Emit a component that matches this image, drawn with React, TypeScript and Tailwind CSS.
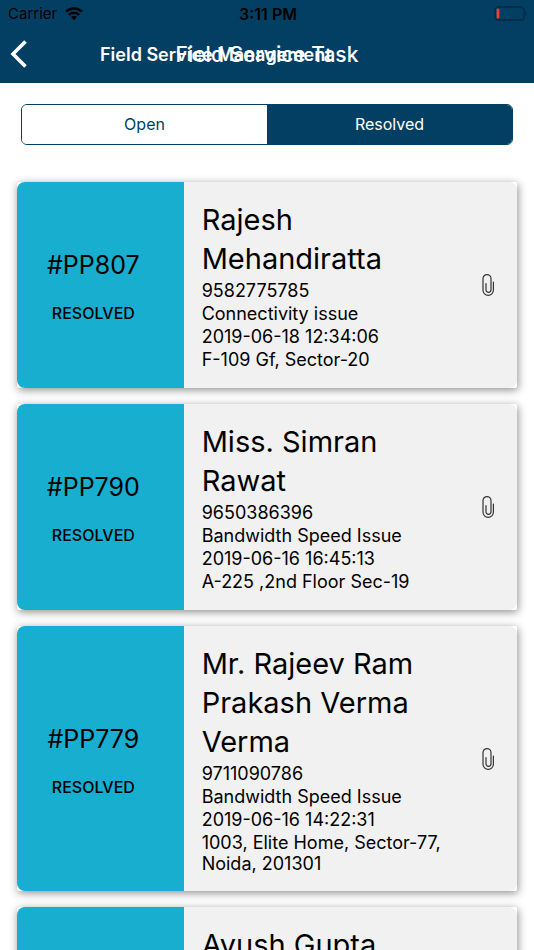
import { useState } from "react";

type Task = {
  id?: string;
  status?: string;
  name: string;
  details: string[];
};

const tasks: Task[] = [
  {
    id: "#PP807",
    status: "RESOLVED",
    name: "Rajesh Mehandiratta",
    details: ["9582775785", "Connectivity issue", "2019-06-18 12:34:06", "F-109 Gf, Sector-20"],
  },
  {
    id: "#PP790",
    status: "RESOLVED",
    name: "Miss. Simran Rawat",
    details: ["9650386396", "Bandwidth Speed Issue", "2019-06-16 16:45:13", "A-225 ,2nd Floor Sec-19"],
  },
  {
    id: "#PP779",
    status: "RESOLVED",
    name: "Mr. Rajeev Ram Prakash Verma Verma",
    details: ["9711090786", "Bandwidth Speed Issue", "2019-06-16 14:22:31", "1003, Elite Home, Sector-77, Noida, 201301"],
  },
  { name: "Ayush Gupta", details: [] },
];

function WifiIcon() {
  return (
    <svg width="18" height="14" viewBox="0 0 18 14" aria-hidden="true">
      <g fill="none" stroke="#000" strokeWidth="2.5">
        <path d="M1 4.7a11.4 11.4 0 0 1 16 0" />
        <path d="M3.9 7.9a7.2 7.2 0 0 1 10.2 0" />
      </g>
      <path d="M9 13.2 6.1 10.3a4.1 4.1 0 0 1 5.8 0z" fill="#000" />
    </svg>
  );
}

function BatteryIcon() {
  return (
    <svg width="34" height="16" viewBox="0 0 34 16" aria-hidden="true">
      <rect x="1" y="1" width="29" height="13" rx="3.5" fill="none" stroke="#022842" strokeWidth="1.3" />
      <rect x="2.6" y="2.8" width="2.8" height="9.6" rx="1" fill="#ff3b30" />
      <path d="M31.3 5.5c1.6.7 1.6 3.6 0 4.3z" fill="#022842" />
    </svg>
  );
}

function PaperclipIcon() {
  return (
    <svg width="14" height="24" viewBox="0 0 14 24" fill="none" stroke="#333" strokeWidth="1.2" strokeLinecap="round" aria-hidden="true">
      <path d="M12.4 9v8.2a5.2 5.2 0 0 1-10.4 0V5.6a4 4 0 0 1 8 0v11.2a2.5 2.5 0 0 1-5 0V10.6" />
    </svg>
  );
}

function TaskCard({ task }: { task: Task }) {
  return (
    <li className="rounded-xs bg-white shadow-[1px_2px_8px_rgba(0,0,0,0.45)]">
      <article className="flex min-h-[206px] overflow-hidden rounded-lg bg-[#f1f1f1]">
        <div className="flex w-1/3 flex-col items-center justify-center gap-5 bg-[#17aed0] pt-1 pr-3.5">
          {task.id && <p className="text-[25px] leading-8">{task.id}</p>}
          {task.status && <p className="text-[16px] leading-6 font-medium">{task.status}</p>}
        </div>
        <div className="flex flex-1 items-center justify-between pr-[22px] pl-[18px]">
          <div className="w-[250px] self-start pt-[18px] pb-[15px]">
            <h2 className="mb-0.5 text-[29px] leading-[39px]">{task.name}</h2>
            {task.details.map((line) => (
              <p key={line} className="mb-0.5 text-[18px] leading-[21px]">
                {line}
              </p>
            ))}
          </div>
          {task.id && (
            <button type="button" aria-label="Attachments">
              <PaperclipIcon />
            </button>
          )}
        </div>
      </article>
    </li>
  );
}

export default function App() {
  const [tab, setTab] = useState("Resolved");

  return (
    <div className="flex h-screen flex-col bg-white font-['Inter','Liberation_Sans',sans-serif] text-black">
      <header className="bg-[#033f63]">
        <div className="grid h-7 grid-cols-3 items-center pr-1.5 pl-2 text-[15px]">
          <div className="flex items-center gap-2">
            <span>Carrier</span>
            <WifiIcon />
          </div>
          <span className="text-center text-[16px] font-semibold">3:11 PM</span>
          <div className="flex justify-end">
            <BatteryIcon />
          </div>
        </div>
        <div className="relative flex h-[55px] items-center pb-0.5 text-white">
          <button type="button" aria-label="Back" className="w-[100px] pb-0.5 pl-2.5">
            <svg width="18" height="28" viewBox="0 0 18 28" fill="none" stroke="#fff" strokeWidth="3.6" aria-hidden="true">
              <path d="M15.5 1.5 3 14l12.5 12.5" />
            </svg>
          </button>
          <span className="text-[18px] font-semibold">Field Service Management</span>
          <h1 className="absolute inset-x-0 text-center text-[21px] font-medium">Field Service Task</h1>
        </div>
      </header>

      <div className="mx-[21px] mt-[21px] flex h-[41px] shrink-0 overflow-hidden rounded-md border border-[#033f63]">
        {["Open", "Resolved"].map((label) => (
          <button
            key={label}
            type="button"
            aria-pressed={tab === label}
            onClick={() => setTab(label)}
            className={`flex-1 pb-0.5 text-[16px] ${tab === label ? "bg-[#033f63] text-white" : "bg-white text-[#033f63]"}`}
          >
            {label}
          </button>
        ))}
      </div>

      <main className="mt-5 flex-1 overflow-y-auto px-[17px] pt-[17px] [scrollbar-width:none]">
        <ul className="flex flex-col gap-4 pb-4">
          {tasks.map((task) => (
            <TaskCard key={task.name} task={task} />
          ))}
        </ul>
      </main>
    </div>
  );
}
